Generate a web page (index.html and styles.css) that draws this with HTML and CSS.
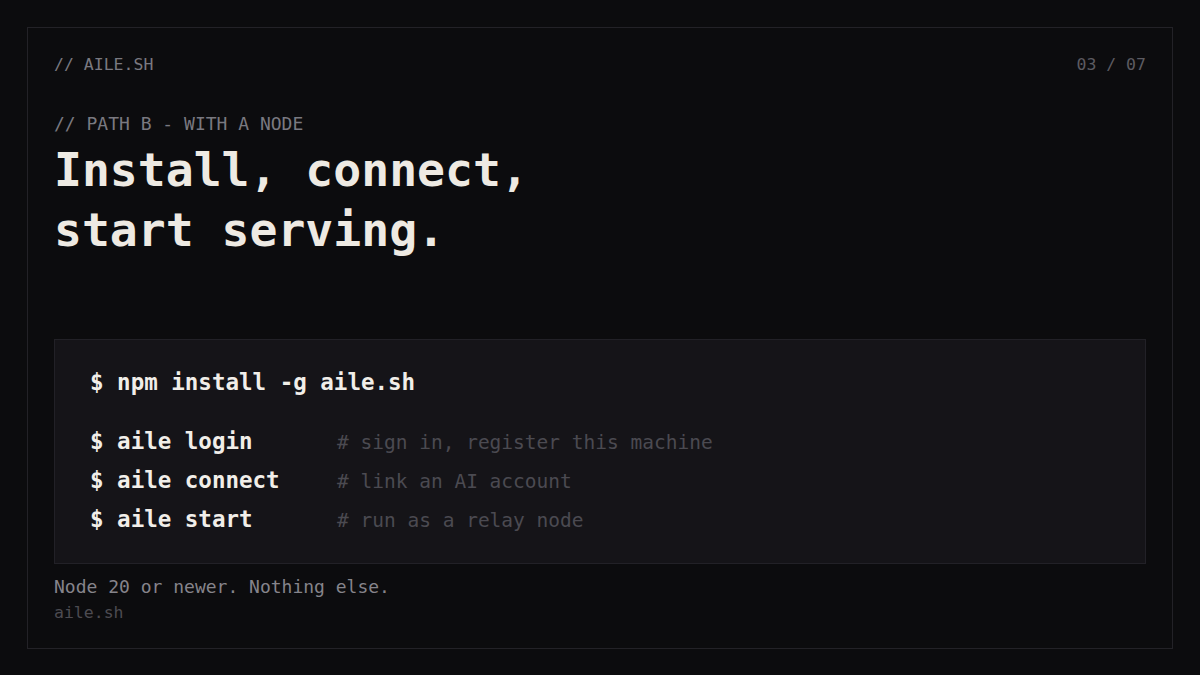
FILE: index.html
```html
<!DOCTYPE html>
<html lang="en">
<head>
<meta charset="utf-8">
<title>aile.sh — Path B</title>
<link rel="stylesheet" href="styles.css">
</head>
<body>
<main class="frame">
  <section class="top">
    <header class="bar">
      <span class="brand">// AILE.SH</span>
      <span class="page">03 / 07</span>
    </header>
    <p class="eyebrow">// PATH B - WITH A NODE</p>
    <h1 class="title">Install, connect,<br>start serving.</h1>
  </section>
  <section class="bottom">
    <div class="code">
      <div class="cmd first">$ npm install -g aile.sh</div>
      <div class="rows">
        <div class="row"><span class="cmd">$ aile login</span><span class="cmt"># sign in, register this machine</span></div>
        <div class="row"><span class="cmd">$ aile connect</span><span class="cmt"># link an AI account</span></div>
        <div class="row"><span class="cmd">$ aile start</span><span class="cmt"># run as a relay node</span></div>
      </div>
    </div>
    <p class="note">Node 20 or newer. Nothing else.</p>
    <p class="url">aile.sh</p>
  </section>
</main>
</body>
</html>
```
FILE: styles.css
```css
* { box-sizing: border-box; }
html, body { margin: 0; padding: 0; }
body {
  width: 1200px;
  height: 675px;
  background: #0c0c0e;
  font-family: "DejaVu Sans Mono", "Liberation Mono", monospace;
  padding: 27px;
}
.frame {
  height: 622px;
  border: 1px solid #232227;
  padding: 27px 26px 25px 26px;
  display: flex;
  flex-direction: column;
  justify-content: space-between;
}
.bar {
  display: flex;
  justify-content: space-between;
  font-size: 16.5px;
  line-height: 20px;
}
.brand { color: #7a7980; }
.page { color: #5c5b61; }
.eyebrow {
  margin: 38px 0 0;
  font-size: 18px;
  line-height: 22px;
  color: #7a7980;
}
.title {
  margin: 5px 0 0;
  font-size: 46.4px;
  line-height: 60px;
  font-weight: bold;
  color: #eeeae3;
}
.code {
  background: #151418;
  border: 1px solid #222127;
  padding: 23px 35px 24px;
}
.cmd {
  font-size: 22.5px;
  font-weight: bold;
  color: #f1eee9;
  line-height: 39px;
}
.rows { margin-top: 20px; }
.row {
  display: flex;
  align-items: baseline;
  height: 39px;
  line-height: 39px;
}
.row .cmd { width: 247px; flex: none; }
.cmt {
  font-size: 19.5px;
  line-height: 39px;
  color: #4b4a51;
}
.note {
  margin: 12px 0 0;
  font-size: 18px;
  line-height: 22px;
  color: #86848b;
}
.url {
  margin: 5px 0 0;
  font-size: 16.5px;
  line-height: 20px;
  color: #4c4b51;
}
```
